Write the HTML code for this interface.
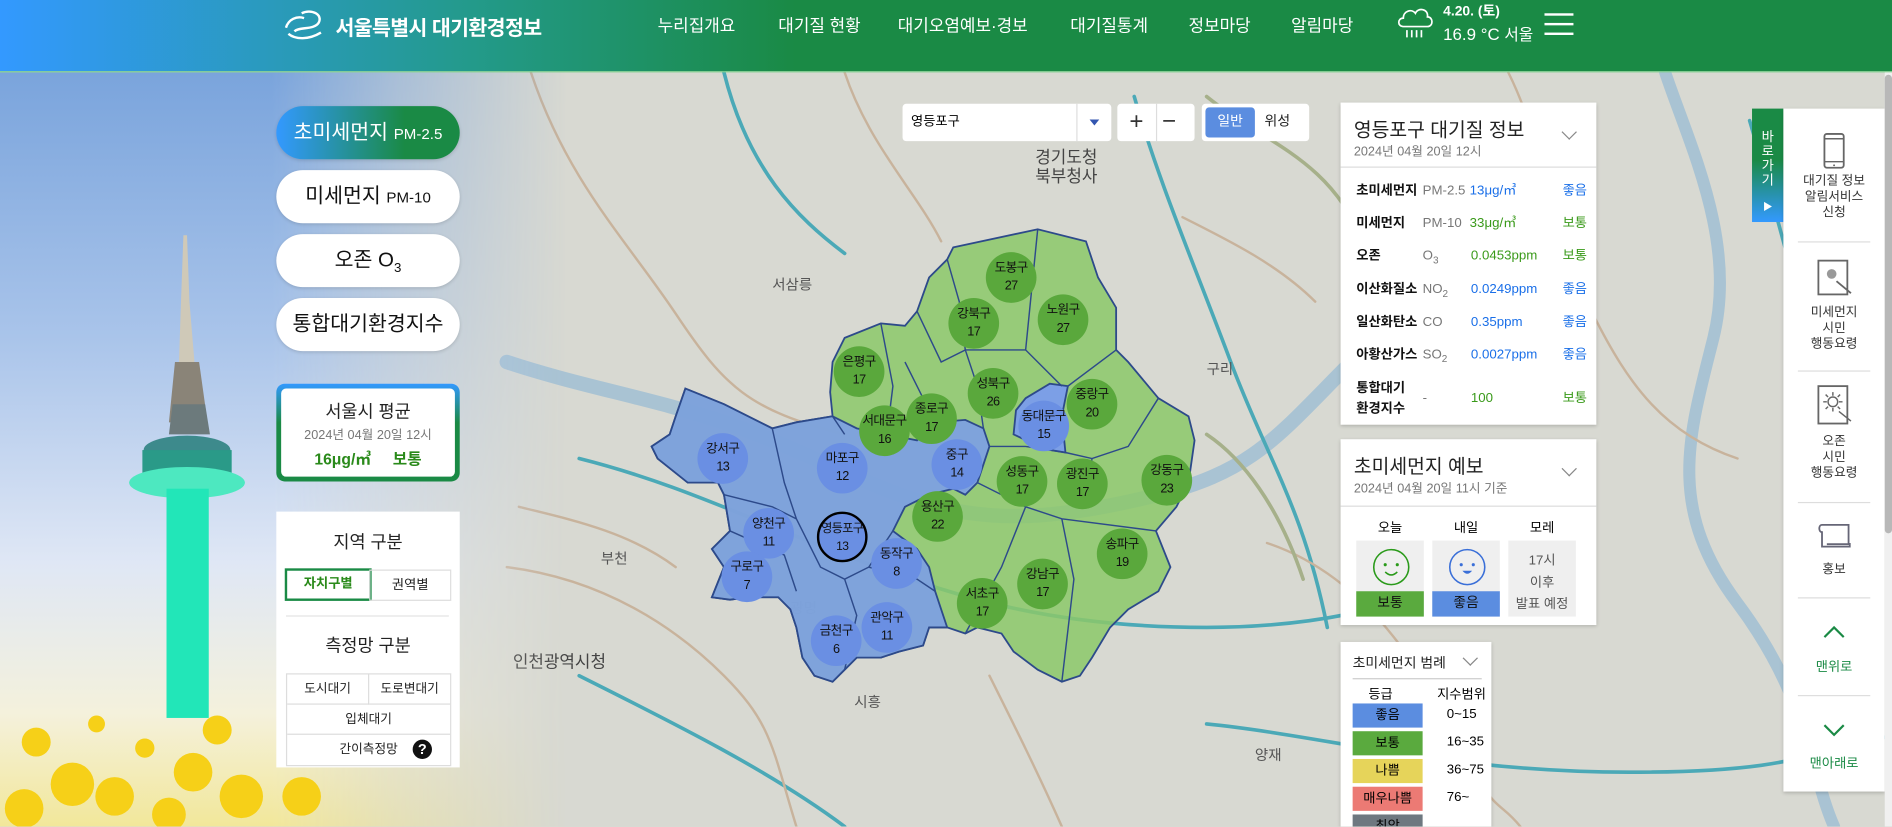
<!DOCTYPE html>
<html><head><meta charset="utf-8">
<style>
html,body{margin:0;padding:0;width:1892px;height:826px;overflow:hidden;background:#d9dad4;font-family:"Liberation Sans","Noto Sans CJK KR",sans-serif;}
#s{position:absolute;left:0;top:0;width:1568px;height:685px;transform:scale(1.20663);transform-origin:0 0;overflow:hidden;background:#d8d9d2;}
.a{position:absolute;}
sub{line-height:0;font-size:75%;}
.hd{left:0;top:0;width:1568px;height:59px;background:linear-gradient(90deg,#3399ff 0%,#239a8a 25%,#1a8a45 42%,#1a8a45 100%);border-bottom:1px solid #7fcf8f;}
.nav{top:11px;color:#fff;font-size:14px;}
.pill{left:229px;width:152px;height:44px;border-radius:22px;background:#fff;box-shadow:0 1px 3px rgba(0,0,0,.15);text-align:center;line-height:44px;font-size:17px;color:#111;}
.pill small{font-size:12.5px;}
.wp{background:#fff;box-shadow:0 1px 3px rgba(0,0,0,.2);}
.row{left:13px;width:200px;height:20px;font-size:11px;line-height:14px;}
.row b{position:absolute;left:0;color:#111;}
.row .f{position:absolute;left:55px;color:#777;}
.row .v{position:absolute;left:95px;}
.row .g{position:absolute;left:171px;}
.bl{color:#1a6fe8}.gr{color:#3a9a1a}
.chev{width:8px;height:8px;border-right:1.5px solid #888;border-bottom:1.5px solid #888;transform:rotate(45deg);}
.dc{position:absolute;width:42px;height:42px;border-radius:50%;text-align:center;font-size:10.5px;line-height:15px;color:#111;box-sizing:border-box;padding-top:6px;white-space:nowrap;letter-spacing:-.5px;}
.dg{background:#5aa83c;}
.db{background:#6a8fe3;}
.sb{left:0;width:84px;text-align:center;font-size:10.5px;color:#333;line-height:13px;}
.dv{left:12px;width:60px;height:1px;background:#ddd;}
</style></head><body>
<div id="s">
<svg class="a" style="left:0;top:0" width="1568" height="685" viewBox="0 0 1568 685">
<g fill="none" stroke-linecap="round">
<path d="M420 300 C480 320 540 330 600 350 S700 395 760 415 S880 430 960 410 S1060 360 1120 300 S1200 200 1260 150" stroke="#a9c3d3" stroke-width="12"/>
<path d="M1380 60 C1400 120 1440 200 1420 280 S1380 420 1440 500 S1500 640 1520 685" stroke="#a9c3d3" stroke-width="10"/>
<path d="M440 60 C470 150 520 200 560 260 S620 340 700 360" stroke="#c8b39c" stroke-width="2"/>
<path d="M600 60 C620 140 660 180 700 210" stroke="#4ba9b7" stroke-width="3"/>
<path d="M480 380 C560 400 620 430 700 460 S860 520 1000 520 S1200 480 1300 460" stroke="#4ba9b7" stroke-width="3"/>
<path d="M940 80 C960 150 990 220 1020 300 S1080 420 1100 520" stroke="#4ba9b7" stroke-width="3"/>
<path d="M1000 600 C1100 610 1200 640 1350 640 S1500 620 1568 610" stroke="#4ba9b7" stroke-width="3"/>
<path d="M480 560 C560 600 640 640 700 685" stroke="#4ba9b7" stroke-width="3"/>
<path d="M700 60 C720 120 760 160 780 200" stroke="#c8b39c" stroke-width="2"/>
<path d="M1000 80 C1050 120 1100 130 1130 200 S1200 280 1240 320" stroke="#a6b08a" stroke-width="3"/>
<path d="M1050 450 C1110 470 1160 520 1200 600 S1240 660 1260 685" stroke="#c8b39c" stroke-width="2"/>
<path d="M420 470 C500 480 560 520 600 560 S640 620 660 685" stroke="#c8b39c" stroke-width="2"/>
<path d="M1250 60 C1280 120 1290 200 1320 260 S1380 360 1440 380" stroke="#c8b39c" stroke-width="2"/>
<path d="M1450 100 C1480 200 1500 300 1540 380" stroke="#4ba9b7" stroke-width="3"/>
<path d="M820 560 C840 600 860 640 880 685" stroke="#c8b39c" stroke-width="2"/>
<path d="M1000 360 C1030 380 1060 420 1080 480" stroke="#a6b08a" stroke-width="3"/>
<path d="M430 420 C470 430 520 440 560 470" stroke="#c8b39c" stroke-width="2"/>
<path d="M980 180 C1020 200 1060 220 1090 250" stroke="#c8b39c" stroke-width="2"/>
</g>
<g font-size="12" fill="#555" font-family="Liberation Sans,Noto Sans CJK KR,sans-serif">
<text x="858" y="135" font-size="14" fill="#444">경기도청</text>
<text x="858" y="151" font-size="14" fill="#444">북부청사</text>
<text x="425" y="553" font-size="14" fill="#444">인천광역시청</text>
<text x="640" y="240">서삼릉</text><text x="1000" y="310">구리</text>
<text x="498" y="467">부천</text><text x="655" y="508">광명</text>
<text x="708" y="586">시흥</text><text x="1040" y="630">양재</text>
</g>
<path d="M790 205 L860 190 L900 200 L910 230 L925 255 L925 290 L935 300 L960 330 L985 345 L990 365 L985 400 L975 420 L958 440 L970 470 L960 490 L935 505 L920 520 L905 545 L895 560 L880 565 L860 555 L840 540 L830 525 L810 520 L800 525 L785 520 L770 520 L765 535 L745 540 L730 545 L710 545 L700 555 L690 565 L675 560 L665 545 L660 520 L655 505 L645 495 L620 495 L605 497 L590 495 L600 470 L590 455 L605 440 L600 410 L595 400 L570 400 L545 380 L540 370 L555 360 L560 345 L568 322 L600 335 L640 355 L660 350 L690 345 L688 325 L690 300 L700 280 L730 268 L750 270 L760 258 L770 230 L785 215 Z" fill="#8cc86a" fill-opacity=".85" stroke="#2d4a8a" stroke-width="1.5"/>
<path d="M568 322 L600 335 L640 355 L660 350 L690 345 L710 355 L735 360 L760 365 L775 350 L800 348 L815 355 L820 370 L810 400 L800 410 L790 405 L770 410 L750 420 L740 440 L760 455 L770 470 L775 490 L785 520 L770 520 L765 535 L745 540 L730 545 L710 545 L700 555 L690 565 L675 560 L665 545 L660 520 L655 505 L645 495 L620 495 L605 497 L590 495 L600 470 L590 455 L605 440 L600 410 L595 400 L570 400 L545 380 L540 370 L555 360 L560 345 Z" fill="#7c9fe6" fill-opacity=".9" stroke="#2d4a8a" stroke-width="1.5"/>
<path d="M850 330 L870 318 L885 320 L880 345 L883 375 L865 372 L840 360 L842 340 Z" fill="#7c9fe6" stroke="#2d4a8a" stroke-width="1.5"/>
<g fill="none" stroke="#2d4a8a" stroke-width="1.2">
<path d="M785 215 L795 250 L800 290"/><path d="M860 190 L855 240 L850 290"/><path d="M760 258 L780 300 L800 290 L850 290 L880 320"/>
<path d="M730 268 L740 320 L735 360"/><path d="M750 300 L765 330 L760 365"/><path d="M800 290 L810 320 L815 355"/>
<path d="M885 320 L925 290"/><path d="M883 375 L905 380 L935 370 L960 330"/><path d="M820 370 L850 370 L883 375"/>
<path d="M810 400 L850 420 L880 430 L958 440"/><path d="M905 380 L900 420"/><path d="M850 420 L830 470 L800 525"/>
<path d="M880 430 L890 480 L880 565"/><path d="M600 410 L640 420 L660 430"/><path d="M605 440 L650 460 L660 490"/>
<path d="M660 430 L680 470 L700 480 L720 470 L740 440"/><path d="M700 480 L710 510 L700 555"/><path d="M720 470 L760 480 L775 490"/>
<path d="M640 355 L650 400 L660 430"/><path d="M690 345 L700 360"/>
</g>
</svg>
<div class="dc dg" style="left:817px;top:209px">도봉구<br>27</div>
<div class="dc dg" style="left:860px;top:244px">노원구<br>27</div>
<div class="dc dg" style="left:786px;top:247px">강북구<br>17</div>
<div class="dc dg" style="left:691px;top:287px">은평구<br>17</div>
<div class="dc dg" style="left:802px;top:305px">성북구<br>26</div>
<div class="dc dg" style="left:884px;top:314px">중랑구<br>20</div>
<div class="dc dg" style="left:751px;top:326px">종로구<br>17</div>
<div class="dc dg" style="left:712px;top:336px">서대문구<br>16</div>
<div class="dc db" style="left:844px;top:332px">동대문구<br>15</div>
<div class="dc db" style="left:578px;top:359px">강서구<br>13</div>
<div class="dc db" style="left:677px;top:367px">마포구<br>12</div>
<div class="dc db" style="left:772px;top:364px">중구<br>14</div>
<div class="dc dg" style="left:826px;top:378px">성동구<br>17</div>
<div class="dc dg" style="left:876px;top:380px">광진구<br>17</div>
<div class="dc dg" style="left:946px;top:377px">강동구<br>23</div>
<div class="dc dg" style="left:756px;top:407px">용산구<br>22</div>
<div class="dc db" style="left:616px;top:421px">양천구<br>11</div>
<div class="dc db" style="left:677px;top:424px;border:2px solid #000;padding-top:5px;font-size:10px">영등포구<br>13</div>
<div class="dc db" style="left:722px;top:446px">동작구<br>8</div>
<div class="dc dg" style="left:909px;top:438px">송파구<br>19</div>
<div class="dc db" style="left:598px;top:457px">구로구<br>7</div>
<div class="dc dg" style="left:843px;top:463px">강남구<br>17</div>
<div class="dc dg" style="left:793px;top:479px">서초구<br>17</div>
<div class="dc db" style="left:714px;top:499px">관악구<br>11</div>
<div class="dc db" style="left:672px;top:510px">금천구<br>6</div>

<div class="a" style="left:0;top:60px;width:470px;height:625px;background:linear-gradient(180deg,#7aa4dc 0%,#a9c4ea 35%,#dfe7f5 65%,#f4f1dc 85%,#f2e79a 100%);-webkit-mask-image:linear-gradient(90deg,#000 0%,#000 48%,rgba(0,0,0,.5) 70%,transparent 100%);"></div>
<svg class="a" style="left:0;top:60px" width="300" height="625" viewBox="0 0 300 625">
<path d="M152 135 L155 135 L157 190 L162 250 L168 290 L150 290 L148 250 L150 190 Z" fill="#cfc9b8"/>
<path d="M145 240 L165 240 L172 290 L140 290 Z" fill="#8a8478"/>
<path d="M143 275 L170 275 L174 300 L140 300 Z" fill="#6c7a7c"/>
<ellipse cx="155" cy="313" rx="36" ry="12" fill="#3d8a8c"/>
<rect x="118" y="313" width="74" height="22" fill="#2a9a88"/>
<ellipse cx="155" cy="340" rx="48" ry="13" fill="#4de8c0"/>
<rect x="138" y="345" width="35" height="190" fill="#22e6b8"/>
<g fill="#f6d018">
<circle cx="30" cy="555" r="12"/><circle cx="60" cy="590" r="18"/><circle cx="20" cy="610" r="16"/><circle cx="95" cy="600" r="16"/>
<circle cx="180" cy="545" r="12"/><circle cx="160" cy="580" r="16"/><circle cx="200" cy="600" r="18"/><circle cx="140" cy="615" r="14"/>
<circle cx="260" cy="560" r="12"/><circle cx="250" cy="600" r="16"/><circle cx="120" cy="560" r="8"/><circle cx="80" cy="540" r="7"/>
</g>
</svg>

<div class="a hd"></div>
<svg class="a" style="left:236px;top:8px" width="36" height="28" viewBox="0 0 36 28"><g fill="none" stroke="#fff" stroke-width="2"><path d="M14 3 C22 -1 32 4 28 11 C24 17 12 14 8 18"/><path d="M3 20 C9 25 20 25 30 19"/><path d="M1 15 C3 8 10 5 16 7"/></g></svg>
<div class="a" style="left:278px;top:9px;color:#fff;font-size:17px;font-weight:bold;letter-spacing:-.5px">서울특별시 대기환경정보</div>
<div class="a nav" style="left:545px">누리집개요</div>
<div class="a nav" style="left:645px">대기질 현황</div>
<div class="a nav" style="left:744px">대기오염예보·경보</div>
<div class="a nav" style="left:887px">대기질통계</div>
<div class="a nav" style="left:985px">정보마당</div>
<div class="a nav" style="left:1070px">알림마당</div>
<svg class="a" style="left:1157px;top:2px" width="32" height="32" viewBox="0 0 32 32"><g fill="none" stroke="#fff" stroke-width="1.4"><path d="M6 20 C1 20 1 13 6 13 C6 7 13 5 16 9 C18 4 27 5 26 12 C31 12 31 20 26 20 Z"/><path d="M9 23v6M13 23v6M17 23v6M21 23v6"/></g></svg>
<div class="a" style="left:1196px;top:1px;color:#fff;font-size:11.5px;font-weight:bold">4.20. (토)</div>
<div class="a" style="left:1196px;top:18px;color:#fff;font-size:14px">16.9 °C <span style="font-size:13px">서울</span></div>
<div class="a" style="left:1280px;top:11px;width:24px;height:2px;background:#fff"></div>
<div class="a" style="left:1280px;top:19px;width:24px;height:2px;background:#fff"></div>
<div class="a" style="left:1280px;top:27px;width:24px;height:2px;background:#fff"></div>

<div class="a pill" style="top:88px;background:linear-gradient(90deg,#3399ff,#1a8a45 70%);color:#fff">초미세먼지 <small>PM-2.5</small></div>
<div class="a pill" style="top:141px">미세먼지 <small>PM-10</small></div>
<div class="a pill" style="top:194px">오존 O<sub style="font-size:11px">3</sub></div>
<div class="a pill" style="top:247px">통합대기환경지수</div>
<div class="a" style="left:229px;top:318px;width:152px;height:81px;border-radius:7px;background:linear-gradient(180deg,#3399ff,#1a8a45 40%);"></div>
<div class="a" style="left:233px;top:322px;width:144px;height:73px;border-radius:4px;background:#fff;text-align:center">
<div style="font-size:14.5px;color:#222;margin-top:8px">서울시 평균</div>
<div style="font-size:10.5px;color:#777;margin-top:2px">2024년 04월 20일 12시</div>
<div style="font-size:13px;color:#2a8a1a;font-weight:bold;margin-top:2px">16μg/㎥ &nbsp;&nbsp;&nbsp; 보통</div></div>
<div class="a wp" style="left:229px;top:424px;width:152px;height:212px;box-shadow:none"></div>
<div class="a" style="left:229px;top:438px;width:152px;text-align:center;font-size:14.5px;color:#222">지역 구분</div>
<div class="a" style="left:237px;top:472px;width:68px;height:23px;border:2px solid #1a8a45;box-sizing:content-box;text-align:center;line-height:23px;font-size:11px;color:#2a8a1a;font-weight:bold;margin:-1px 0 0 -1px">자치구별</div>
<div class="a" style="left:306px;top:472px;width:66px;height:24px;border:1px solid #ddd;text-align:center;line-height:24px;font-size:11px;color:#222">권역별</div>
<div class="a" style="left:237px;top:510px;width:135px;height:1px;background:#e3e3e3"></div>
<div class="a" style="left:229px;top:524px;width:152px;text-align:center;font-size:14.5px;color:#222">측정망 구분</div>
<div class="a" style="left:237px;top:558px;width:135px;height:75px;border:1px solid #ddd;font-size:10.5px;color:#222">
<div class="a" style="left:0;top:0;width:67px;height:24px;border-right:1px solid #ddd;border-bottom:1px solid #ddd;text-align:center;line-height:24px">도시대기</div>
<div class="a" style="left:68px;top:0;width:67px;height:24px;border-bottom:1px solid #ddd;text-align:center;line-height:24px">도로변대기</div>
<div class="a" style="left:0;top:25px;width:135px;height:24px;border-bottom:1px solid #ddd;text-align:center;line-height:24px">입체대기</div>
<div class="a" style="left:0;top:50px;width:135px;height:25px;text-align:center;line-height:25px">간이측정망</div>
<div class="a" style="left:104px;top:54px;width:16px;height:16px;border-radius:50%;background:#111;color:#fff;font-weight:bold;font-size:12px;line-height:16px;text-align:center">?</div>
</div>

<div class="a" style="left:748px;top:86px;width:173px;height:31px;background:#fff;border-radius:3px;font-size:11px;line-height:31px"><span style="margin-left:7px">영등포구</span>
<div class="a" style="left:144px;top:0;width:1px;height:31px;background:#ddd"></div>
<div class="a" style="left:155px;top:13px;border-left:4px solid transparent;border-right:4px solid transparent;border-top:5px solid #3356b0"></div></div>
<div class="a" style="left:926px;top:86px;width:64px;height:31px;background:#fff;border-radius:3px;font-size:20px;color:#333;line-height:30px">
<span class="a" style="left:10px">+</span><div class="a" style="left:32px;top:0;width:1px;height:31px;background:#ddd"></div><span class="a" style="left:37px;top:0">−</span></div>
<div class="a" style="left:996px;top:86px;width:89px;height:31px;background:#fff;border-radius:3px;font-size:11.5px;line-height:31px">
<div class="a" style="left:3px;top:3px;width:41px;height:25px;background:#5b8de0;border-radius:3px;color:#fff;text-align:center;line-height:25px">일반</div>
<span class="a" style="left:52px;color:#222">위성</span></div>

<div class="a wp" style="left:1111px;top:85px;width:212px;height:267px">
<div class="a" style="left:11px;top:9px;font-size:16px;color:#222">영등포구 대기질 정보</div>
<div class="a" style="left:11px;top:33px;font-size:10.5px;color:#777">2024년 04월 20일 12시</div>
<div class="a chev" style="left:185px;top:20px"></div>
<div class="a" style="left:0;top:53px;width:212px;height:1px;background:#ddd"></div>
<div class="a row" style="top:66px"><b>초미세먼지</b><span class="f">PM-2.5</span><span class="v bl" style="left:94px">13μg/㎥</span><span class="g bl">좋음</span></div>
<div class="a row" style="top:93px"><b>미세먼지</b><span class="f">PM-10</span><span class="v gr" style="left:94px">33μg/㎥</span><span class="g gr">보통</span></div>
<div class="a row" style="top:120px"><b>오존</b><span class="f">O<sub>3</sub></span><span class="v gr">0.0453ppm</span><span class="g gr">보통</span></div>
<div class="a row" style="top:148px"><b>이산화질소</b><span class="f">NO<sub>2</sub></span><span class="v bl">0.0249ppm</span><span class="g bl">좋음</span></div>
<div class="a row" style="top:175px"><b>일산화탄소</b><span class="f">CO</span><span class="v bl">0.35ppm</span><span class="g bl">좋음</span></div>
<div class="a row" style="top:202px"><b>아황산가스</b><span class="f">SO<sub>2</sub></span><span class="v bl">0.0027ppm</span><span class="g bl">좋음</span></div>
<div class="a row" style="top:229px;height:34px"><b style="line-height:17px">통합대기<br>환경지수</b><span class="f" style="top:9px">-</span><span class="v gr" style="top:9px">100</span><span class="g gr" style="top:9px">보통</span></div>
</div>

<div class="a wp" style="left:1111px;top:364px;width:212px;height:154px">
<div class="a" style="left:11px;top:9px;font-size:16px;color:#222">초미세먼지 예보</div>
<div class="a" style="left:11px;top:33px;font-size:10.5px;color:#777">2024년 04월 20일 11시 기준</div>
<div class="a chev" style="left:185px;top:20px"></div>
<div class="a" style="left:0;top:55px;width:212px;height:1px;background:#ddd"></div>
<div class="a" style="left:13px;top:65px;width:56px;text-align:center;font-size:11px">오늘</div>
<div class="a" style="left:76px;top:65px;width:56px;text-align:center;font-size:11px">내일</div>
<div class="a" style="left:139px;top:65px;width:56px;text-align:center;font-size:11px">모레</div>
<div class="a" style="left:13px;top:84px;width:56px;height:63px;background:#efefef"></div>
<svg class="a" style="left:26px;top:90px" width="32" height="32"><circle cx="16" cy="16" r="14.5" fill="none" stroke="#2a9a1a" stroke-width="1.3"/><circle cx="11" cy="14" r="1.3" fill="#2a9a1a"/><circle cx="21" cy="14" r="1.3" fill="#2a9a1a"/><path d="M11 20 Q16 25 21 20" fill="none" stroke="#2a9a1a" stroke-width="1.3"/></svg>
<div class="a" style="left:13px;top:126px;width:56px;height:21px;background:#5aaa3e;text-align:center;line-height:21px;font-size:11.5px;color:#111">보통</div>
<div class="a" style="left:76px;top:84px;width:56px;height:63px;background:#efefef"></div>
<svg class="a" style="left:89px;top:90px" width="32" height="32"><circle cx="16" cy="16" r="14.5" fill="none" stroke="#3a6fd8" stroke-width="1.3"/><circle cx="11" cy="14" r="1.3" fill="#3a6fd8"/><circle cx="21" cy="14" r="1.3" fill="#3a6fd8"/><path d="M12 19 Q16 24 20 19 Z" fill="#3a6fd8"/></svg>
<div class="a" style="left:76px;top:126px;width:56px;height:21px;background:#5b8de0;text-align:center;line-height:21px;font-size:11.5px;color:#111">좋음</div>
<div class="a" style="left:139px;top:84px;width:56px;height:63px;background:#efefef;text-align:center;font-size:11px;color:#555;line-height:18px;padding-top:8px;box-sizing:border-box">17시<br>이후<br>발표 예정</div>
</div>

<div class="a wp" style="left:1111px;top:532px;width:125px;height:160px;font-size:11px">
<div class="a" style="left:10px;top:9px;font-size:11.5px;color:#222">초미세먼지 범례</div>
<div class="a chev" style="left:103px;top:9px"></div>
<div class="a" style="left:10px;top:30px;width:107px;height:1px;background:#ccc"></div>
<div class="a" style="left:23px;top:35px">등급</div><div class="a" style="left:80px;top:35px">지수범위</div>
<div class="a" style="left:10px;top:51px;width:58px;height:20px;background:#5b8de0;text-align:center;line-height:20px">좋음</div><div class="a" style="left:88px;top:54px">0~15</div>
<div class="a" style="left:10px;top:74px;width:58px;height:20px;background:#5aaa3e;text-align:center;line-height:20px">보통</div><div class="a" style="left:88px;top:77px">16~35</div>
<div class="a" style="left:10px;top:97px;width:58px;height:20px;background:#e6d45a;text-align:center;line-height:20px">나쁨</div><div class="a" style="left:88px;top:100px">36~75</div>
<div class="a" style="left:10px;top:120px;width:58px;height:20px;background:#ec7a74;text-align:center;line-height:20px">매우나쁨</div><div class="a" style="left:88px;top:123px">76~</div>
<div class="a" style="left:10px;top:143px;width:58px;height:20px;background:#6e7880;text-align:center;line-height:20px">최악</div>
</div>

<div class="a" style="left:1452px;top:90px;width:26px;height:94px;background:linear-gradient(180deg,#1a8a45 0%,#1a8a45 45%,#3399ff 100%);color:#fff;font-size:11px;text-align:center;line-height:12px;padding-top:18px;box-sizing:border-box">바<br>로<br>가<br>기<div style="margin-top:10px;font-size:8px">▶</div></div>
<div class="a wp" style="left:1478px;top:90px;width:84px;height:566px">
<svg class="a" style="left:33px;top:20px" width="18" height="30"><rect x="1" y="1" width="16" height="28" rx="2" fill="none" stroke="#666" stroke-width="1.5"/><path d="M1 5H17M1 24H17" stroke="#666" stroke-width="1.2"/><circle cx="9" cy="27" r=".8" fill="#666"/></svg>
<div class="a sb" style="top:54px">대기질 정보<br>알림서비스<br>신청</div>
<div class="a dv" style="top:110px"></div>
<svg class="a" style="left:28px;top:125px" width="30" height="30"><rect x="1" y="1" width="24" height="28" fill="none" stroke="#666" stroke-width="1.5"/><circle cx="12" cy="12" r="4" fill="#999"/><path d="M16 18 L28 28" stroke="#666" stroke-width="1.5"/></svg>
<div class="a sb" style="top:163px">미세먼지<br>시민<br>행동요령</div>
<div class="a dv" style="top:217px"></div>
<svg class="a" style="left:28px;top:229px" width="30" height="34"><rect x="1" y="1" width="24" height="31" fill="none" stroke="#666" stroke-width="1.5"/><circle cx="13" cy="14" r="4" fill="none" stroke="#666" stroke-width="1.2"/><path d="M13 6v3M13 19v3M5 14h3M18 14h3M7 8l2 2M17 18l2 2M19 8l-2 2M7 20l2-2M18 22L28 30" stroke="#666" stroke-width="1.2"/></svg>
<div class="a sb" style="top:270px">오존<br>시민<br>행동요령</div>
<div class="a dv" style="top:326px"></div>
<svg class="a" style="left:28px;top:343px" width="30" height="22"><path d="M4 2 H26 V18 H8 M4 2 C1 2 1 8 4 8 V20 H27 V17" fill="none" stroke="#667" stroke-width="1.5"/></svg>
<div class="a sb" style="top:376px">홍보</div>
<div class="a dv" style="top:405px"></div>
<svg class="a" style="left:32px;top:428px" width="20" height="12"><path d="M2 10 L10 2 L18 10" fill="none" stroke="#1a8a45" stroke-width="1.8"/></svg>
<div class="a sb" style="top:457px;color:#1a8a45;font-size:11px">맨위로</div>
<div class="a dv" style="top:486px"></div>
<svg class="a" style="left:32px;top:509px" width="20" height="12"><path d="M2 2 L10 10 L18 2" fill="none" stroke="#1a8a45" stroke-width="1.8"/></svg>
<div class="a sb" style="top:537px;color:#1a8a45;font-size:11px">맨아래로</div>
</div>
<div class="a" style="left:1562px;top:60px;width:6px;height:625px;background:#f0f0f0"></div>
<div class="a" style="left:1562px;top:62px;width:6px;height:380px;background:#b8b8b8;border-radius:3px"></div>
</div>
</body></html>
